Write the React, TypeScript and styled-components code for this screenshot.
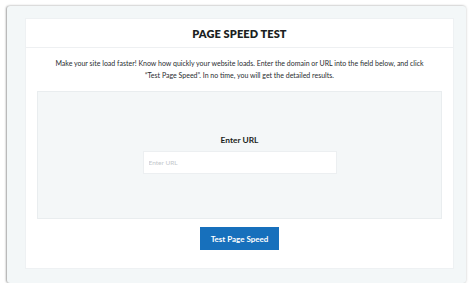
import styled, { createGlobalStyle } from 'styled-components'

const GlobalStyle = createGlobalStyle`
  body {
    margin: 0;
    background: #ffffff;
    font-family: Lato, "Open Sans", sans-serif;
    color: #1f2326;
  }
`

const Frame = styled.div`
  margin: 6px 8px 0 7px;
  height: 277px;
  box-sizing: border-box;
  padding: 12px 12px 14px 18px;
  background-color: #f3f7f8;
  box-shadow: -1px 0 2px rgba(0, 0, 0, 0.3), 0 0 3px rgba(0, 0, 0, 0.18);
  border-radius: 3px;
`

const Card = styled.section`
  height: 100%;
  background-color: #ffffff;
  border: 1px solid #eef1f3;
  box-sizing: border-box;
  display: flex;
  flex-direction: column;
`

const CardHeader = styled.header`
  height: 28px;
  display: flex;
  align-items: center;
  justify-content: center;
  border-bottom: 1px solid #eef0f2;
`

const Title = styled.h1`
  margin: 0;
  font-size: 11px;
  font-weight: 800;
  letter-spacing: 0.1px;
  color: #1c1f22;
`

const Intro = styled.p`
  margin: 9px 0 0;
  padding: 0 6px;
  font-size: 7px;
  line-height: 12px;
  text-align: center;
  color: #2a2d30;
`

const TestBox = styled.div`
  margin: 10px 11px 0;
  height: 128px;
  box-sizing: border-box;
  background-color: #f4f7f8;
  border: 1px solid #e9edef;
  display: flex;
  flex-direction: column;
  align-items: center;
  padding-top: 43px;
`

const Label = styled.label`
  font-size: 8.4px;
  font-weight: 700;
  color: #1c1f22;
  margin-bottom: 6px;
`

const UrlInput = styled.input`
  width: 194px;
  height: 23px;
  box-sizing: border-box;
  border: 1px solid #eceff1;
  background: #ffffff;
  padding: 0 5px;
  font-family: inherit;
  font-size: 6.5px;
  outline: none;
  &::placeholder {
    color: #c4c8cb;
  }
`

const Actions = styled.div`
  display: flex;
  justify-content: center;
  margin-top: 8px;
`

const Button = styled.button`
  width: 79px;
  height: 23px;
  border: none;
  background-color: #1770bc;
  color: #ffffff;
  font-family: inherit;
  font-size: 8px;
  font-weight: 700;
  cursor: pointer;
`

export default function App() {
  return (
    <>
      <GlobalStyle />
      <Frame>
        <Card>
          <CardHeader>
            <Title>PAGE SPEED TEST</Title>
          </CardHeader>
          <Intro>
            Make your site load faster! Know how quickly your website loads. Enter the domain or URL into the field below, and click
            <br />
            “Test Page Speed”. In no time, you will get the detailed results.
          </Intro>
          <TestBox>
            <Label htmlFor="url">Enter URL</Label>
            <UrlInput id="url" placeholder="Enter URL" />
          </TestBox>
          <Actions>
            <Button>Test Page Speed</Button>
          </Actions>
        </Card>
      </Frame>
    </>
  )
}
